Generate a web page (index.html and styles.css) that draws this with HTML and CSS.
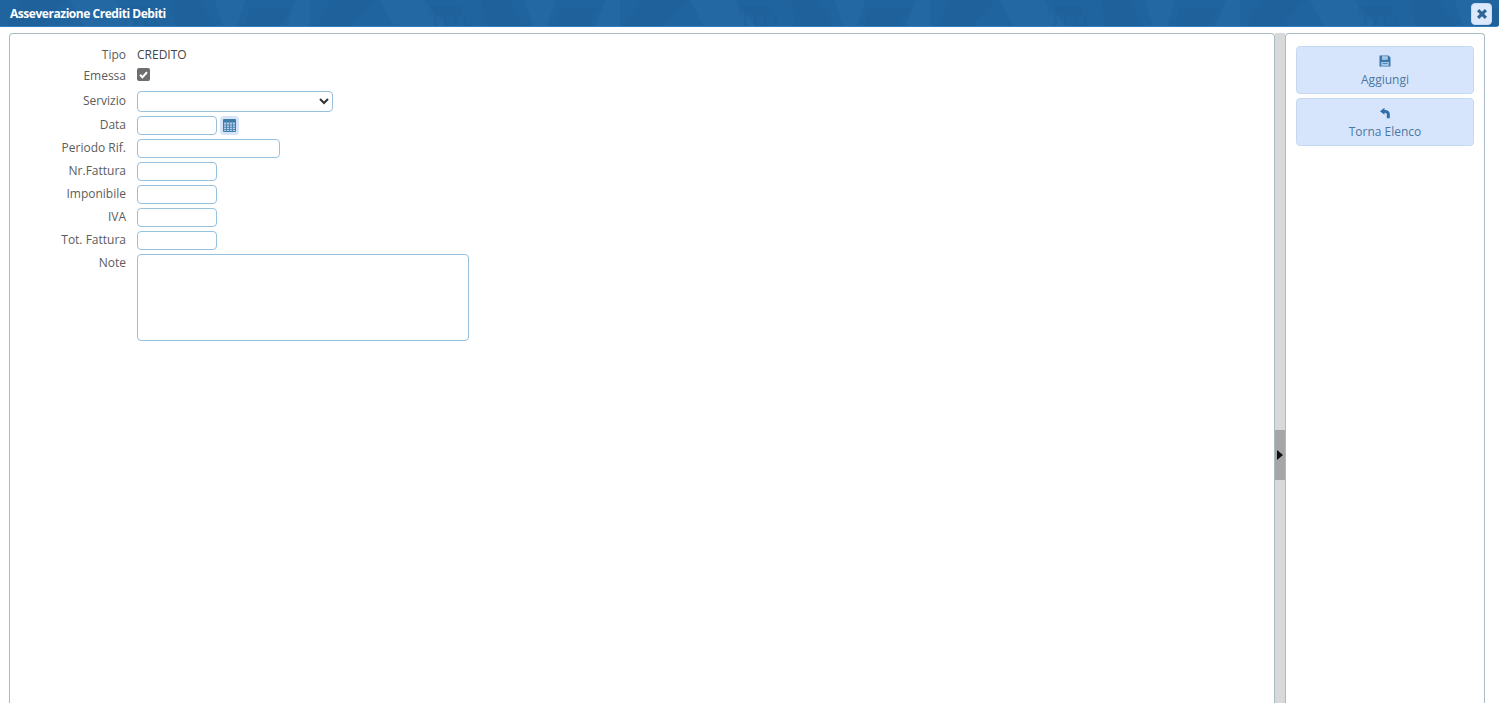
FILE: index.html
```html
<!DOCTYPE html>
<html lang="it">
<head>
  <meta charset="UTF-8" />
  <title>Asseverazione Crediti Debiti</title>
  <link rel="stylesheet" href="styles.css">
</head>
<body>
  <header class="title-bar">
    <svg class="title-texture" width="100%" height="26" aria-hidden="true">
      <defs>
        <pattern id="mesh" width="310" height="26" patternUnits="userSpaceOnUse">
          <path d="M20 0h46l-24 26H6zM118 6h34v9h-34zM170 0h30l14 26h-38zM250 8h40l-10 18h-36z" fill="#1b5a92" opacity=".3"/>
          <path d="M70 0h44l22 26H84zM215 0h30l-8 26h-14zM296 0h14v26h-24z" fill="#2a70ab" opacity=".28"/>
          <path d="M124 15h3v11h-3zM134 15h3v11h-3zM144 15h3v11h-3zM154 15h3v11h-3z" fill="#1b5a92" opacity=".35"/>
        </pattern>
      </defs>
      <rect width="100%" height="26" fill="url(#mesh)"/>
    </svg>
    <span class="title-text">Asseverazione Crediti Debiti</span>
    <button class="close-btn" aria-label="Chiudi">
      <svg width="12" height="12" viewBox="0 0 12 12"><path d="M1 3.200 3.200 1 6 3.800 8.800 1 11 3.200 8.200 6 11 8.800 8.800 11 6 8.200 3.200 11 1 8.800 3.800 6z" fill="#2f6594"/></svg>
    </button>
  </header>

  <div class="workspace">
    <main class="form-panel">
      <form class="form-grid">
        <label class="row-tipo">Tipo</label>
        <span class="row-tipo value">CREDITO</span>

        <label class="row-emessa">Emessa</label>
        <div class="row-emessa"><span class="fake-check"><svg width="13" height="13" viewBox="0 0 13 13"><path d="M3 6.800 5.400 9.200 10 4.200" fill="none" stroke="#fff" stroke-width="2"/></svg></span></div>

        <label class="row-servizio">Servizio</label>
        <div class="row-servizio"><select class="field w-select"><option></option></select></div>

        <label class="field-label">Data</label>
        <div class="field-with-icon">
          <input class="field w-short" type="text">
          <span class="cal-btn">
            <svg width="13" height="13" viewBox="0 0 13 13">
              <path d="M.5.500h12v12H.5z" fill="#b4cde8" stroke="#3f7cab"/>
              <path d="M1 1h11v2.600H1z" fill="#3f7cab"/>
              <path d="M.5 6h12M.5 8.300h12M.5 10.500h12M3.500 4v8M6.500 4v8M9.500 4v8" stroke="#3f7cab" stroke-width=".8"/>
            </svg>
          </span>
        </div>

        <label class="field-label">Periodo Rif.</label>
        <input class="field w-mid" type="text">

        <label class="field-label">Nr.Fattura</label>
        <input class="field w-short" type="text">

        <label class="field-label">Imponibile</label>
        <input class="field w-short" type="text">

        <label class="field-label">IVA</label>
        <input class="field w-short" type="text">

        <label class="field-label">Tot. Fattura</label>
        <input class="field w-short" type="text">

        <label class="label-note">Note</label>
        <textarea class="field w-note"></textarea>
      </form>
    </main>

    <div class="splitter">
      <div class="splitter-handle"><span class="arrow"></span></div>
    </div>

    <aside class="side-panel">
      <button class="action-btn">
        <svg width="12" height="12" viewBox="0 0 12 12">
          <path fill-rule="evenodd" d="M.5.500h9L11.500 2.500v9H.5zM3 1.500v3h5.500v-3zM2.500 7v3.500h7V7z" fill="#3a77ad"/>
          <path d="M3 1.500h5.500v3H3zM2.500 7h7v3.500h-7z" fill="#a9c6e6"/>
          <path d="M3.500 8h5v.8h-5z" fill="#3a77ad"/>
        </svg>
        <span>Aggiungi</span>
      </button>
      <button class="action-btn">
        <svg width="12" height="12" viewBox="0 0 12 12">
          <path d="M5.500 .800 1 4.300 5.500 7.800V5.700C7.300 5.700 7.800 6.500 7.800 7.500V11.200h3V7C10.800 4.300 8.500 3 5.500 3z" fill="#2f6ea8"/>
        </svg>
        <span>Torna Elenco</span>
      </button>
    </aside>
  </div>
</body>
</html>
```

FILE: styles.css
```css
html, body {
  height: 100%;
}
body {
  margin: 0;
  background: #fff;
  font-family: "Open Sans", "Liberation Sans", sans-serif;
  font-size: 12px;
  color: #555;
  display: flex;
  flex-direction: column;
  overflow: hidden;
}
/* Barra titolo */
.title-bar {
  height: 26px;
  flex: none;
  position: relative;
  display: flex;
  align-items: center;
  justify-content: space-between;
  padding: 0 7px 0 10px;
  border-bottom: 1px solid #2f7fc0;
  border-bottom-right-radius: 3px;
  background: #20649f;
}
.title-texture {
  position: absolute;
  top: 0;
  left: 0;
}
.title-text {
  position: relative;
  color: #fff;
  font-size: 12px;
  font-weight: 700;
  letter-spacing: -0.46px;
}
.close-btn {
  position: relative;
  width: 21px;
  height: 22px;
  padding: 0;
  margin-top: 2px;
  border: 1px solid #c7d9f2;
  border-radius: 4px;
  background: #dce8fb;
  display: flex;
  align-items: center;
  justify-content: center;
}
/* Pannelli */
.workspace {
  flex: 1;
  display: flex;
  padding: 6px 14px 0 9px;
  min-height: 0;
}
.form-panel {
  flex: 1;
  border: 1px solid #a9bcc4;
  border-bottom: none;
  border-radius: 4px 4px 0 0;
  padding: 12px 0 0 0;
}
.form-grid {
  display: grid;
  grid-template-columns: 116px 1fr;
  column-gap: 11px;
  row-gap: 4px;
  align-items: center;
  justify-items: start;
}
.form-grid label {
  justify-self: end;
  color: #5c5c5c;
}
.form-grid .field-label {
  padding-bottom: 2px;
}
.row-tipo {
  line-height: 18px;
}
.row-emessa {
  line-height: 16px;
  height: 16px;
}
.form-grid .row-servizio {
  align-self: start;
  margin-top: 3px;
}
.form-grid label.row-servizio {
  line-height: 20px;
}
.value {
  color: #444;
}
.fake-check {
  display: block;
  width: 13px;
  height: 13px;
  background: #6e6e6e;
  border-radius: 2px;
}
.field {
  display: block;
  box-sizing: border-box;
  height: 19px;
  margin: 0;
  padding: 0 4px;
  border: 1px solid #96c2de;
  border-radius: 4px;
  background: #fff;
  font-family: inherit;
  font-size: 12px;
  color: #333;
}
.w-short {
  width: 80px;
}
.w-mid {
  width: 143px;
}
.w-select {
  width: 196px;
  height: 21px;
}
.w-note {
  width: 332px;
  height: 87px;
  resize: none;
}
.label-note {
  align-self: start;
}
.field-with-icon {
  display: flex;
  align-items: center;
  gap: 3px;
}
.cal-btn {
  width: 19px;
  height: 19px;
  border-radius: 4px;
  background: #d5e4f8;
  display: flex;
  align-items: center;
  justify-content: center;
}
.splitter {
  width: 10px;
  flex: none;
  background: #d9d9d9;
  position: relative;
}
.splitter-handle {
  position: absolute;
  top: 397px;
  left: 0;
  width: 100%;
  height: 50px;
  background: #a6a6a6;
  display: flex;
  align-items: center;
  justify-content: center;
}
.arrow {
  width: 0;
  height: 0;
  border-top: 5px solid transparent;
  border-bottom: 5px solid transparent;
  border-left: 6px solid #111;
}
.side-panel {
  width: 200px;
  flex: none;
  box-sizing: border-box;
  border: 1px solid #a9bcc4;
  border-bottom: none;
  border-radius: 4px 4px 0 0;
  padding: 12px 10px 0 10px;
  display: flex;
  flex-direction: column;
  gap: 4px;
}
.action-btn {
  height: 48px;
  padding: 8px 0 0 0;
  border: 1px solid #c5d9f1;
  border-radius: 4px;
  background: #d7e5fc;
  color: #4a78a3;
  font-family: inherit;
  font-size: 12px;
  display: flex;
  flex-direction: column;
  align-items: center;
  gap: 4px;
}
.action-btn span {
  line-height: 17px;
}
```
